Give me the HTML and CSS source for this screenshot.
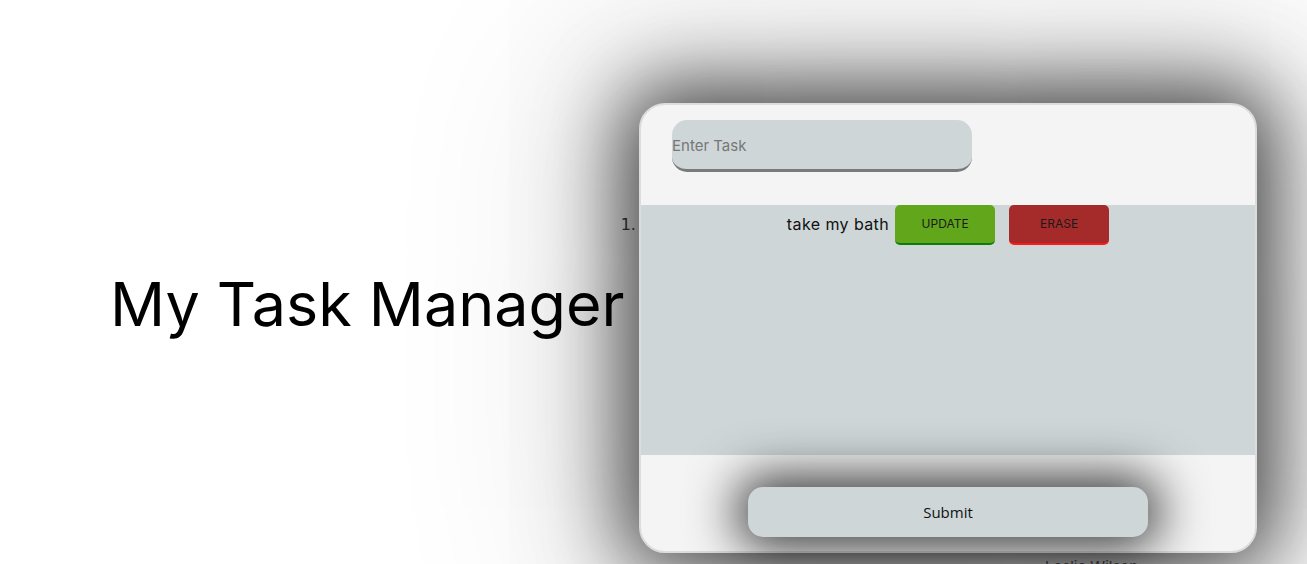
FILE: index.html
```html
<!DOCTYPE html>
<html lang="en">
<head>
<meta charset="utf-8">
<title>My Task Manager</title>
<link rel="stylesheet" href="styles.css">
</head>
<body>
<main class="page">
  <h1 class="title">My Task Manager</h1>
  <section class="app">
    <div class="card">
      <div class="entry">
        <input class="task-input" type="text" placeholder="Enter Task">
      </div>
      <ol class="task-list">
        <li class="task"><span class="task-text">take my bath</span><button class="btn btn-update">UPDATE</button><button class="btn btn-erase">ERASE</button></li>
      </ol>
      <div class="actions">
        <button class="submit">Submit</button>
      </div>
    </div>
    <p class="credit">Leslie Wilson</p>
  </section>
</main>
</body>
</html>
```
FILE: styles.css
```css
html, body {
  margin: 0;
  padding: 0;
  height: 100%;
  overflow: hidden;
  background: #ffffff;
}

body {
  font-family: "Inter", "Open Sans", sans-serif;
  color: #111;
}

.page {
  display: grid;
  grid-template-columns: 529px 618px;
  padding-left: 110px;
  height: 564px;
}

.title {
  margin: 274px 0 0 0;
  font-size: 61px;
  font-weight: 400;
  line-height: 1;
  white-space: nowrap;
  color: #000;
}

.app {
  padding-top: 103px;
}

.card {
  position: relative;
  z-index: 1;
  box-sizing: border-box;
  width: 618px;
  height: 450px;
  background: #f4f4f4;
  border: 2px solid #dcdcdc;
  border-radius: 26px;
  box-shadow: 0 0 80px 16px rgba(0, 0, 0, 0.7), 0 0 180px 70px rgba(0, 0, 0, 0.14);
  display: flex;
  flex-direction: column;
}

.entry {
  padding: 15px 0 0 31px;
  height: 85px;
  box-sizing: border-box;
}

.task-input {
  display: block;
  box-sizing: border-box;
  width: 300px;
  height: 52px;
  margin: 0;
  padding: 2px 0 0 0;
  border: none;
  border-bottom: 3px solid #7a7a7a;
  border-radius: 15px;
  background: #ced6d7;
  font-family: "Inter", sans-serif;
  font-size: 15px;
  color: #333;
  outline: none;
}

.task-input::placeholder {
  color: #777;
}

.task-list {
  margin: 15px 0 0 0;
  padding: 0;
  height: 250px;
  background: #ced6d7;
  list-style-position: outside;
}

.task {
  text-align: center;
  font-size: 16px;
  line-height: 38px;
}

.task::marker {
  font-family: "DejaVu Sans", sans-serif;
  font-size: 16px;
  color: #222;
}

.task-text {
  letter-spacing: 0.4px;
  color: #111;
}

.btn {
  display: inline-block;
  box-sizing: border-box;
  width: 100px;
  height: 40px;
  padding: 0;
  border: none;
  border-radius: 5px;
  font-family: "Inter", sans-serif;
  font-size: 12px;
  color: #1a1a1a;
  vertical-align: top;
  line-height: 38px;
}

.btn-update {
  margin-left: 6px;
  background: #62a71b;
  border-bottom: 2px solid #0a7d0a;
}

.btn-erase {
  margin-left: 14px;
  background: #a52a2a;
  border-bottom: 2px solid #ff1a1a;
}

.actions {
  display: flex;
  justify-content: center;
  padding-top: 32px;
}

.submit {
  box-sizing: border-box;
  width: 400px;
  height: 50px;
  border: none;
  border-radius: 15px;
  background: #ced6d7;
  font-family: "Open Sans", sans-serif;
  font-size: 15px;
  color: #111;
  box-shadow: 0 0 50px 10px rgba(0, 0, 0, 0.78);
}

.credit {
  margin: 6px 0 0 0;
  padding-left: 406px;
  font-family: "Inter", sans-serif;
  font-size: 15px;
  line-height: 1;
  color: #666;
}
```
